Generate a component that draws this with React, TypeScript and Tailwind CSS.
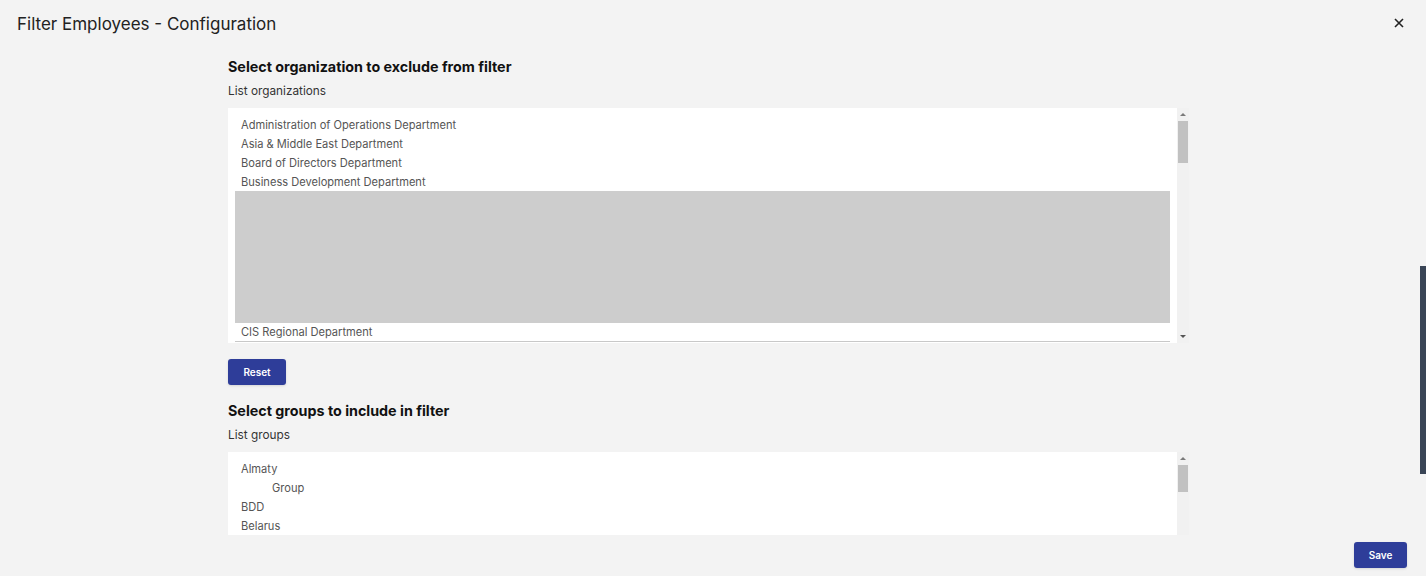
import React from "react";

const organizations = [
  "Administration of Operations Department",
  "Asia & Middle East Department",
  "Board of Directors Department",
  "Business Development Department",
];

const groups: { name: string; indent?: boolean }[] = [
  { name: "Almaty" },
  { name: "Group", indent: true },
  { name: "BDD" },
  { name: "Belarus" },
];

function ListScrollbar({ thumbHeight, showDown }: { thumbHeight: string; showDown?: boolean }) {
  return (
    <div className="w-[12px] bg-[#f1f1f1] flex flex-col items-center">
      <div className="h-[13px] flex items-center justify-center">
        <span className="w-0 h-0 border-x-[3px] border-x-transparent border-b-[3px] border-b-[#7a7a7a]" />
      </div>
      <div className={`w-[10px] bg-[#c1c1c1] ${thumbHeight}`} />
      <div className="flex-1" />
      {showDown && (
        <div className="h-[13px] flex items-center justify-center">
          <span className="w-0 h-0 border-x-[3px] border-x-transparent border-t-[3px] border-t-[#555]" />
        </div>
      )}
    </div>
  );
}

export default function App() {
  return (
    <div
      className="w-[1426px] h-[576px] bg-[#f3f3f3] flex flex-col relative overflow-hidden"
      style={{ fontFamily: "Inter, 'Open Sans', sans-serif" }}
    >
      {/* Header */}
      <header className="flex items-center justify-between h-[46px] pl-[17px] pr-[22px] shrink-0">
        <h1 className="text-[17px] text-[#222] mt-[4px]">Filter Employees - Configuration</h1>
        <button className="text-[#222]" aria-label="close">
          <svg width="10" height="10" viewBox="0 0 10 10" stroke="currentColor" strokeWidth="1.6">
            <path d="M1 1l8 8M9 1l-8 8" />
          </svg>
        </button>
      </header>

      {/* Body */}
      <div className="flex-1 overflow-hidden pl-[228px]">
        <div className="w-[961px]">
          <h2 className="text-[14.3px] font-bold text-[#111] mt-[12px] leading-[18px]">
            Select organization to exclude from filter
          </h2>
          <div className="text-[11.8px] text-[#333] mt-[7px] leading-[16px]">List organizations</div>

          <div className="mt-[9px] h-[235px] flex">
            <div className="flex-1 bg-white pt-[7px] px-[7px] flex flex-col">
              {organizations.map((o) => (
                <div key={o} className="h-[19px] leading-[20px] pl-[6px] text-[11.1px] text-[#555]">
                  {o}
                </div>
              ))}
              <div className="h-[132px] bg-[#cdcdcd]" />
              <div className="h-[19px] leading-[19px] pl-[6px] text-[11.1px] text-[#555] border-b border-[#c8c8c8]">
                CIS Regional Department
              </div>
            </div>
            <ListScrollbar thumbHeight="h-[42px]" showDown />
          </div>

          <button className="mt-[16px] w-[58px] h-[26px] rounded-[3px] bg-[#2e3d99] text-white text-[10px] font-semibold shadow-sm">
            Reset
          </button>

          <h2 className="text-[14.3px] font-bold text-[#111] mt-[17px] leading-[18px]">
            Select groups to include in filter
          </h2>
          <div className="text-[11.8px] text-[#333] mt-[7px] leading-[16px]">List groups</div>

          <div className="mt-[9px] h-[120px] flex">
            <div className="flex-1 bg-white pt-[8px] px-[7px] flex flex-col">
              {groups.map((g) => (
                <div
                  key={g.name}
                  className={`h-[19px] leading-[19px] text-[11.1px] text-[#555] ${g.indent ? "pl-[37px]" : "pl-[6px]"}`}
                >
                  {g.name}
                </div>
              ))}
            </div>
            <ListScrollbar thumbHeight="h-[27px]" />
          </div>
        </div>
      </div>

      {/* Footer */}
      <footer className="h-[41px] shrink-0 flex items-start justify-end pr-[19px] pt-[7px]">
        <button className="w-[53px] h-[26px] rounded-[3px] bg-[#2e3d99] text-white text-[10px] font-semibold shadow-sm">
          Save
        </button>
      </footer>

      {/* page scrollbar thumb */}
      <div className="absolute right-0 top-[266px] w-[6px] h-[208px] bg-[#3a4556]" />
    </div>
  );
}
